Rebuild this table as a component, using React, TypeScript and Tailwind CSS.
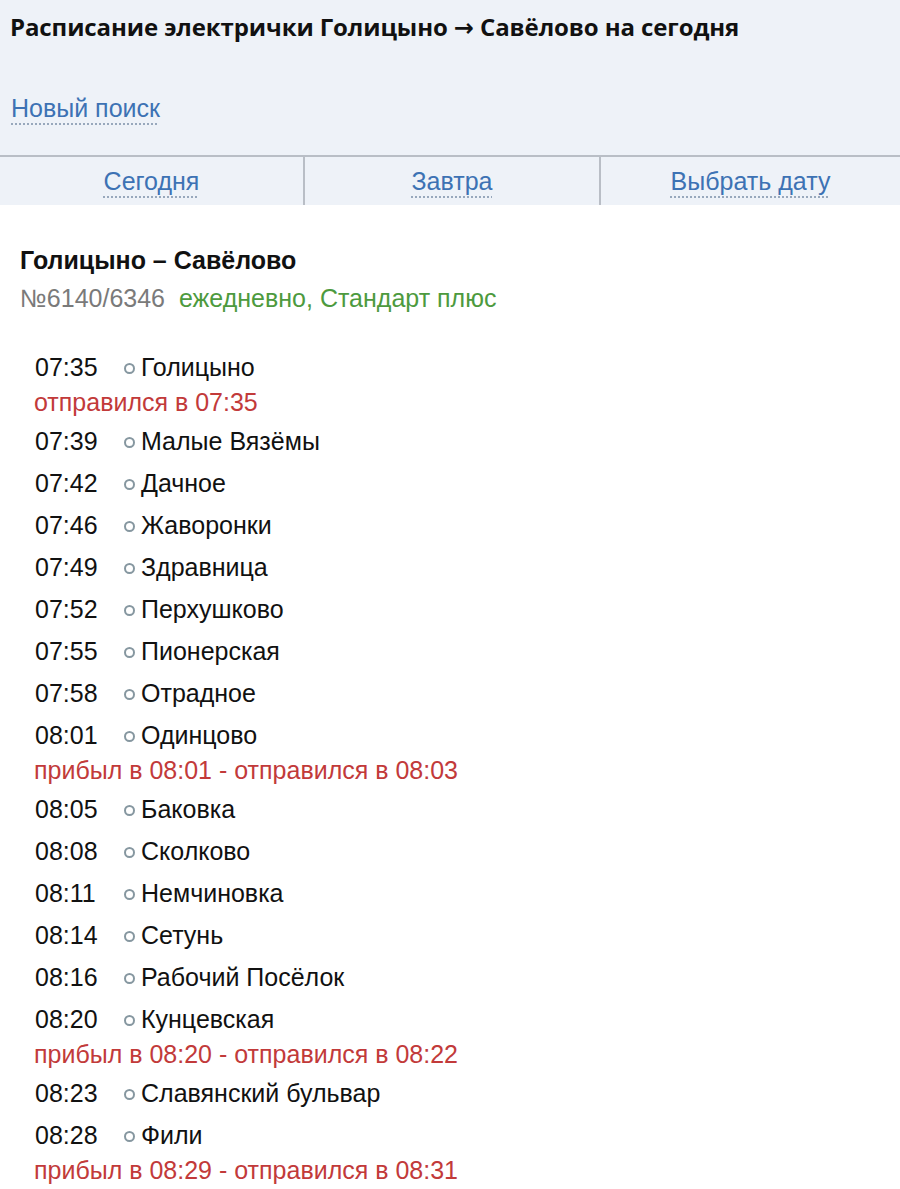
const stops: { time: string; name: string; note?: string }[] = [
  { time: '07:35', name: 'Голицыно', note: 'отправился в 07:35' },
  { time: '07:39', name: 'Малые Вязёмы' },
  { time: '07:42', name: 'Дачное' },
  { time: '07:46', name: 'Жаворонки' },
  { time: '07:49', name: 'Здравница' },
  { time: '07:52', name: 'Перхушково' },
  { time: '07:55', name: 'Пионерская' },
  { time: '07:58', name: 'Отрадное' },
  { time: '08:01', name: 'Одинцово', note: 'прибыл в 08:01 - отправился в 08:03' },
  { time: '08:05', name: 'Баковка' },
  { time: '08:08', name: 'Сколково' },
  { time: '08:11', name: 'Немчиновка' },
  { time: '08:14', name: 'Сетунь' },
  { time: '08:16', name: 'Рабочий Посёлок' },
  { time: '08:20', name: 'Кунцевская', note: 'прибыл в 08:20 - отправился в 08:22' },
  { time: '08:23', name: 'Славянский бульвар' },
  { time: '08:28', name: 'Фили', note: 'прибыл в 08:29 - отправился в 08:31' },
];

const linkCls =
  'text-[#3d72b4] underline decoration-dotted decoration-[#98a8bc] decoration-2 underline-offset-[6px]';

export default function App() {
  return (
    <div className="w-[900px] h-[1189px] overflow-hidden bg-white font-['Liberation_Sans',Arial,sans-serif]">
      {/* header */}
      <div className="bg-[#eef2f8] border-b-2 border-[#b9bec6]">
        <h1 className="px-[10px] pt-[11px] font-['Open_Sans',sans-serif] text-[24px] font-bold leading-[32px] tracking-[-0.1px] text-[#111]">
          Расписание электрички Голицыно{' '}
          <span className="font-['DejaVu_Sans',sans-serif] text-[24px]">→</span> Савёлово на сегодня
        </h1>
        <div className="px-[11px] pt-[48px] pb-[31px] text-[25px] leading-[32px]">
          <a className={linkCls}>Новый поиск</a>
        </div>
      </div>

      {/* tabs */}
      <div className="grid h-[48px] grid-cols-[305px_296px_1fr] bg-[#eef2f8]">
        <div className="flex items-center justify-center border-r-2 border-[#b9bec6] pt-[2px] text-[25px]">
          <a className={linkCls}>Сегодня</a>
        </div>
        <div className="flex items-center justify-center border-r-2 border-[#b9bec6] pt-[2px] text-[25px]">
          <a className={linkCls}>Завтра</a>
        </div>
        <div className="flex items-center justify-center pt-[2px] text-[25px]">
          <a className={linkCls}>Выбрать дату</a>
        </div>
      </div>

      {/* route */}
      <div className="pl-[20px] pt-[40px]">
        <div className="text-[25px] font-bold leading-[30px] text-[#111]">Голицыно – Савёлово</div>
        <div className="mt-[8px] text-[25px] leading-[30px]">
          <span className="text-[#7a7a7a]">№6140/6346</span>
          <span className="ml-[14px] text-[#4d9a3e]">ежедневно, Стандарт плюс</span>
        </div>
      </div>

      <div className="pl-[35px] pt-[34px]">
        {stops.map((s) => (
          <div key={s.time}>
            <div className="flex h-[42px] items-center text-[25px] text-[#111]">
              <span className="w-[89px]">{s.time}</span>
              <span className="mr-[6px] h-[11px] w-[11px] rounded-full border-2 border-[#8697a0]" />
              <span>{s.name}</span>
            </div>
            {s.note && (
              <div className="-ml-[1px] h-[32px] text-[25px] leading-[26px] text-[#c23a3a]">{s.note}</div>
            )}
          </div>
        ))}
      </div>
    </div>
  );
}
